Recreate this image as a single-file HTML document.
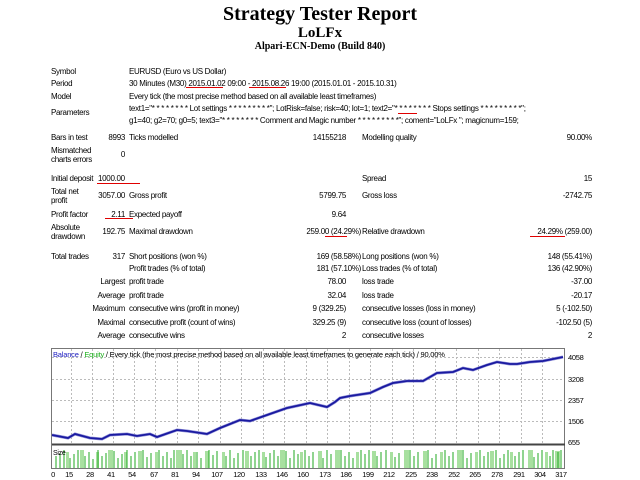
<!DOCTYPE html>
<html><head><meta charset="utf-8"><style>
body{margin:0;width:640px;height:480px;background:#fff;position:relative;overflow:hidden;font-family:"Liberation Sans",sans-serif;font-size:8px;letter-spacing:-0.3px;color:#000}
div{position:absolute;white-space:nowrap;line-height:9px}
.t{font-family:"Liberation Serif",serif;font-weight:bold;letter-spacing:0;left:0;width:640px;text-align:center}
.r{text-align:right}
.u{position:absolute;height:1px;background:#e00000}
</style></head><body>
<div class="t" style="top:3px;font-size:20px;line-height:22px">Strategy Tester Report</div>
<div class="t" style="top:25px;font-size:15px;line-height:16px">LoLFx</div>
<div class="t" style="top:41px;font-size:10px;line-height:11px">Alpari-ECN-Demo (Build 840)</div>

<div style="left:51px;top:67px">Symbol</div><div style="left:129px;top:67px">EURUSD (Euro vs US Dollar)</div>
<div style="left:51px;top:79px">Period</div><div style="left:129px;top:79px">30 Minutes (M30) 2015.01.02 09:00 - 2015.08.26 19:00 (2015.01.01 - 2015.10.31)</div>
<div style="left:51px;top:92px">Model</div><div style="left:129px;top:92px">Every tick (the most precise method based on all available least timeframes)</div>
<div style="left:51px;top:108px">Parameters</div>
<div style="left:129px;top:104px">text1="* * * * * * * * Lot settings * * * * * * * * *"; LotRisk=false; risk=40; lot=1; text2="* * * * * * * * Stops settings * * * * * * * * *";</div>
<div style="left:129px;top:116px">g1=40; g2=70; g0=5; text3="* * * * * * * * Comment and Magic number * * * * * * * * *"; coment="LoLFx "; magicnum=159;</div>

<div style="left:51px;top:133px">Bars in test</div><div class="r" style="right:515px;top:133px">8993</div>
<div style="left:129px;top:133px">Ticks modelled</div><div class="r" style="right:294px;top:133px">14155218</div>
<div style="left:362px;top:133px">Modelling quality</div><div class="r" style="right:48px;top:133px">90.00%</div>
<div style="left:51px;top:146px">Mismatched<br>charts errors</div><div class="r" style="right:515px;top:150px">0</div>

<div style="left:51px;top:174px">Initial deposit</div><div style="left:98px;top:174px">1000.00</div>
<div style="left:362px;top:174px">Spread</div><div class="r" style="right:48px;top:174px">15</div>
<div style="left:51px;top:187px">Total net<br>profit</div><div class="r" style="right:515px;top:191px">3057.00</div>
<div style="left:129px;top:191px">Gross profit</div><div class="r" style="right:294px;top:191px">5799.75</div>
<div style="left:362px;top:191px">Gross loss</div><div class="r" style="right:48px;top:191px">-2742.75</div>
<div style="left:51px;top:210px">Profit factor</div><div class="r" style="right:515px;top:210px">2.11</div>
<div style="left:129px;top:210px">Expected payoff</div><div class="r" style="right:294px;top:210px">9.64</div>
<div style="left:51px;top:223px">Absolute<br>drawdown</div><div class="r" style="right:515px;top:227px">192.75</div>
<div style="left:129px;top:227px">Maximal drawdown</div><div class="r" style="right:279px;top:227px">259.00 (24.29%)</div>
<div style="left:362px;top:227px">Relative drawdown</div><div class="r" style="right:48px;top:227px">24.29% (259.00)</div>

<div style="left:51px;top:252px">Total trades</div><div class="r" style="right:515px;top:252px">317</div>
<div style="left:129px;top:252px">Short positions (won %)</div><div class="r" style="right:279px;top:252px">169 (58.58%)</div>
<div style="left:362px;top:252px">Long positions (won %)</div><div class="r" style="right:48px;top:252px">148 (55.41%)</div>
<div style="left:129px;top:264px">Profit trades (% of total)</div><div class="r" style="right:279px;top:264px">181 (57.10%)</div>
<div style="left:362px;top:264px">Loss trades (% of total)</div><div class="r" style="right:48px;top:264px">136 (42.90%)</div>
<div class="r" style="right:515px;top:277px">Largest</div><div style="left:129px;top:277px">profit trade</div><div class="r" style="right:294px;top:277px">78.00</div>
<div style="left:362px;top:277px">loss trade</div><div class="r" style="right:48px;top:277px">-37.00</div>
<div class="r" style="right:515px;top:291px">Average</div><div style="left:129px;top:291px">profit trade</div><div class="r" style="right:294px;top:291px">32.04</div>
<div style="left:362px;top:291px">loss trade</div><div class="r" style="right:48px;top:291px">-20.17</div>
<div class="r" style="right:515px;top:304px">Maximum</div><div style="left:129px;top:304px">consecutive wins (profit in money)</div><div class="r" style="right:294px;top:304px">9 (329.25)</div>
<div style="left:362px;top:304px">consecutive losses (loss in money)</div><div class="r" style="right:48px;top:304px">5 (-102.50)</div>
<div class="r" style="right:515px;top:318px">Maximal</div><div style="left:129px;top:318px">consecutive profit (count of wins)</div><div class="r" style="right:294px;top:318px">329.25 (9)</div>
<div style="left:362px;top:318px">consecutive loss (count of losses)</div><div class="r" style="right:48px;top:318px">-102.50 (5)</div>
<div class="r" style="right:515px;top:331px">Average</div><div style="left:129px;top:331px">consecutive wins</div><div class="r" style="right:294px;top:331px">2</div>
<div style="left:362px;top:331px">consecutive losses</div><div class="r" style="right:48px;top:331px">2</div>

<span class="u" style="left:186px;top:87px;width:37px"></span>
<span class="u" style="left:249px;top:87px;width:37px"></span>
<span class="u" style="left:398px;top:113px;width:19px"></span>
<span class="u" style="left:97px;top:183px;width:43px"></span>
<span class="u" style="left:105px;top:218px;width:28px"></span>
<span class="u" style="left:325px;top:236px;width:22px"></span>
<span class="u" style="left:530px;top:236px;width:35px"></span>

<svg style="position:absolute;left:0;top:0" width="640" height="480">
<rect x="51.5" y="348.5" width="513" height="120" fill="#fff" stroke="#777"/>
<g stroke="#bbb" stroke-dasharray="2,2" stroke-width="1">
<path d="M52 357.5H564M52 379.5H564M52 400.5H564M52 421.5H564"/>
<path d="M71.5 349V444M92.5 349V444M113.5 349V444M134.5 349V444M155.5 349V444M177.5 349V444M198.5 349V444M220.5 349V444M241.5 349V444M263.5 349V444M284.5 349V444M306.5 349V444M327.5 349V444M349.5 349V444M370.5 349V444M392.5 349V444M413.5 349V444M435.5 349V444M456.5 349V444M478.5 349V444M499.5 349V444M521.5 349V444M542.5 349V444"/>
</g>
<path d="M52 444.5H565" stroke="#444" stroke-width="2"/>
<polyline fill="none" stroke="#9090d8" stroke-width="3" points="52,435 68,438 75,434 90,438 102,439 110,435 127,434 137,436 150,434 157,437 177,430 187,431 207,434 220,428 240,420 250,421 267,415 287,408 310,403 327,407 335,402 340,398 350,396 370,393 383,387 393,383 407,381 423,381 437,373 453,372 463,368 473,370 487,365 497,362 510,364 517,364 530,362 543,361 563,357"/>
<polyline fill="none" stroke="#1a1aa0" stroke-width="1.8" points="52,435 68,438 75,434 90,438 102,439 110,435 127,434 137,436 150,434 157,437 177,430 187,431 207,434 220,428 240,420 250,421 267,415 287,408 310,403 327,407 335,402 340,398 350,396 370,393 383,387 393,383 407,381 423,381 437,373 453,372 463,368 473,370 487,365 497,362 510,364 517,364 530,362 543,361 563,357"/>
<g fill="#a8e0a0">
<path d="M66 452h3v16h-3zM80 450h4v18h-4zM96 452h3v16h-3zM108 450h5v18h-5zM124 452h3v16h-3zM138 451h4v17h-4zM155 452h3v16h-3zM176 450h6v18h-6zM193 452h3v16h-3zM205 451h4v17h-4zM222 452h3v16h-3zM245 451h4v17h-4zM262 452h3v16h-3zM280 450h5v18h-5zM300 452h3v16h-3zM318 451h4v17h-4zM335 450h5v18h-5zM356 452h3v16h-3zM372 451h4v17h-4zM390 452h3v16h-3zM404 450h5v18h-5zM423 451h4v17h-4zM440 452h3v16h-3zM457 450h5v18h-5zM475 452h3v16h-3zM490 451h4v17h-4zM510 452h3v16h-3zM528 450h5v18h-5zM545 452h3v16h-3zM555 451h5v17h-5z"/>
</g>
<path stroke="#22aa22" stroke-width="1" fill="none" d="M56 468v-12M60 468v-15M64 468v-18M70 468v-10M74 468v-14M78 468v-18M85 468v-12M89 468v-16M93 468v-9M98 468v-18M102 468v-12M106 468v-15M114 468v-17M118 468v-10M122 468v-14M127 468v-18M131 468v-12M135 468v-16M143 468v-18M147 468v-11M151 468v-15M159 468v-18M163 468v-12M167 468v-16M171 468v-10M174 468v-18M183 468v-14M187 468v-18M191 468v-12M197 468v-16M201 468v-10M209 468v-18M213 468v-13M217 468v-17M226 468v-12M230 468v-18M234 468v-10M238 468v-15M243 468v-18M251 468v-12M255 468v-16M259 468v-18M266 468v-11M270 468v-15M274 468v-18M278 468v-12M286 468v-17M290 468v-10M294 468v-18M298 468v-14M305 468v-18M309 468v-12M313 468v-16M323 468v-10M327 468v-18M331 468v-14M341 468v-18M345 468v-12M349 468v-16M353 468v-10M361 468v-18M365 468v-14M369 468v-18M377 468v-12M381 468v-16M386 468v-18M395 468v-11M399 468v-15M410 468v-18M414 468v-12M418 468v-16M428 468v-18M432 468v-10M436 468v-14M445 468v-18M449 468v-12M453 468v-16M463 468v-18M467 468v-10M471 468v-15M480 468v-18M484 468v-12M488 468v-16M496 468v-18M500 468v-10M504 468v-14M508 468v-18M515 468v-12M519 468v-16M523 468v-18M534 468v-11M538 468v-15M542 468v-18M550 468v-12M553 468v-18M558 468v-16M561 468v-18"/>
<text x="53" y="455" font-size="7" font-family="Liberation Sans" fill="#000">Size</text>
<text x="53" y="357" font-size="7.5" font-family="Liberation Sans" letter-spacing="-0.2"><tspan fill="#2020c0">Balance</tspan> / <tspan fill="#20b020">Equity</tspan> / Every tick (the most precise method based on all available least timeframes to generate each tick) / 90.00%</text>
<g font-size="7.5" font-family="Liberation Sans" fill="#000">
<text x="568" y="360">4058</text><text x="568" y="382">3208</text><text x="568" y="403">2357</text><text x="568" y="424">1506</text><text x="568" y="445">655</text>
</g>
<g font-size="7.5" font-family="Liberation Sans" fill="#000" text-anchor="middle">
<text x="53" y="477">0</text><text x="69" y="477">15</text><text x="90" y="477">28</text><text x="111" y="477">41</text><text x="132" y="477">54</text><text x="154" y="477">67</text><text x="175" y="477">81</text><text x="196" y="477">94</text><text x="217" y="477">107</text><text x="239" y="477">120</text><text x="261" y="477">133</text><text x="282" y="477">146</text><text x="303" y="477">160</text><text x="325" y="477">173</text><text x="346" y="477">186</text><text x="368" y="477">199</text><text x="389" y="477">212</text><text x="411" y="477">225</text><text x="432" y="477">238</text><text x="454" y="477">252</text><text x="475" y="477">265</text><text x="497" y="477">278</text><text x="519" y="477">291</text><text x="540" y="477">304</text><text x="561" y="477">317</text>
</g>
</svg>
</body></html>
